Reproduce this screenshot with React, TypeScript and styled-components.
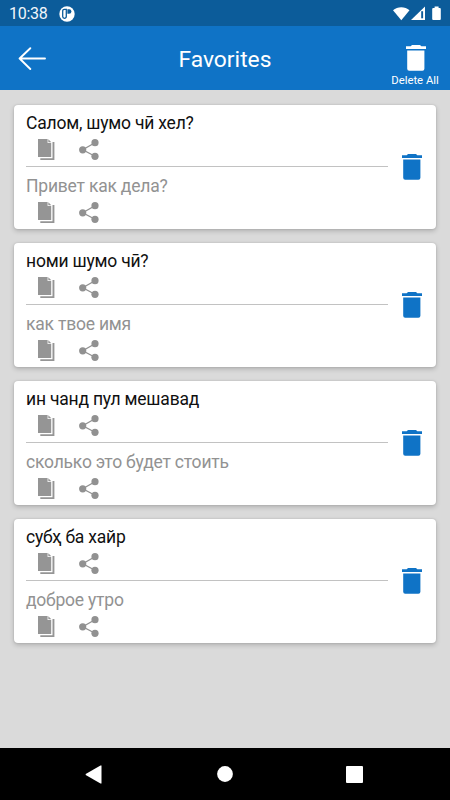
import React from 'react';
import styled, { createGlobalStyle } from 'styled-components';

const Global = createGlobalStyle`
  * { box-sizing: border-box; }
  body { margin: 0; font-family: Roboto, "Noto Sans", sans-serif; background: #dadada; }
`;

const Screen = styled.div`
  width: 450px;
  height: 800px;
  display: flex;
  flex-direction: column;
  overflow: hidden;
  background: #dadada;
  svg { display: block; flex: none; }
`;

const StatusBar = styled.header`
  height: 26px;
  flex: none;
  display: flex;
  align-items: center;
  padding: 1px 8px 0 9px;
  background: #0c5c9a;
  color: #f1f6fb;
`;

const Clock = styled.span`
  width: 50px;
  font-size: 16px;
  line-height: 24px;
  letter-spacing: -0.3px;
`;

const StatusIcons = styled.div`
  display: flex;
  align-items: center;
  margin-left: auto;
`;

const AppBar = styled.div`
  height: 64px;
  flex: none;
  display: grid;
  grid-template-columns: 80px 1fr 80px;
  background: #0f73c6;
  color: #fff;
`;

const BackButton = styled.button`
  border: 0;
  background: none;
  padding: 0 0 0 18px;
  display: flex;
  align-items: center;
`;

const Title = styled.h1`
  margin: 0;
  padding-top: 3px;
  font-size: 22.8px;
  font-weight: 400;
  line-height: 62px;
  text-align: center;
`;

const DeleteAll = styled.button`
  border: 0;
  background: none;
  color: #fff;
  font: 400 11.3px/14px Roboto, sans-serif;
  padding: 18px 0 0 10px;
  display: flex;
  flex-direction: column;
  align-items: center;
  justify-content: flex-start;
  gap: 2px;
  width: 80px;
  white-space: nowrap;
  svg { margin-left: 2px; }
`;

const List = styled.main`
  flex: 1;
  display: flex;
  flex-direction: column;
  gap: 14px;
  padding: 15px 14px 0;
`;

const Card = styled.article`
  height: 124px;
  flex: none;
  display: grid;
  grid-template-columns: 362px 1fr;
  padding-left: 12px;
  background: #fff;
  border-radius: 4px;
  box-shadow: 0 2px 5px rgba(0, 0, 0, 0.2), 0 0 2px rgba(0, 0, 0, 0.14);
`;

const Phrase = styled.section<{ $muted?: boolean }>`
  height: 62px;
  padding-top: ${(p) => (p.$muted ? 8 : 7)}px;
  border-bottom: ${(p) => (p.$muted ? 'none' : '1px solid #c2c2c2')};
  color: ${(p) => (p.$muted ? '#929292' : '#101010')};
`;

const PhraseText = styled.p`
  margin: 0;
  height: 22px;
  font-size: 17.5px;
  font-weight: 400;
  line-height: 22px;
  letter-spacing: -0.21px;
  white-space: nowrap;
`;

const Actions = styled.div`
  display: flex;
  gap: 24px;
  padding: 5px 0 0 11px;
`;

const RemoveButton = styled.button`
  border: 0;
  background: none;
  color: #0f73c6;
  padding: 0 0 1px;
  display: flex;
  align-items: center;
  justify-content: center;
`;

const NavBar = styled.nav`
  height: 52px;
  flex: none;
  display: grid;
  grid-template-columns: 17px 16px 17px;
  align-items: center;
  justify-content: space-between;
  padding: 0 87px 0 85px;
  background: #000;
`;

const HomeIcon = styled.svg`
  margin-left: 1px;
`;

const Trash = () => (
  <svg width="20" height="28" viewBox="0 0 20 28" fill="currentColor">
    <path d="M6 1h8l1.300 1.200H20V5H0V2.200H4.700zM1.200 6.600h17.200v18.200a2 2 0 0 1-2 2H3.200a2 2 0 0 1-2-2z" />
  </svg>
);

const CopyIcon = () => (
  <svg width="18" height="21" viewBox="0 0 18 21" fill="#959595">
    <path d="M1 0h9.600v4.100h3.600V18H1z" />
    <path d="M11.300 0.300l3 3h-3z" />
    <path d="M15.500 3h1.900v18H3.300v-1.700h12.200z" />
  </svg>
);

const ShareIcon = () => (
  <svg width="20" height="21" viewBox="0 0 20 21" fill="#919191">
    <path d="M16 3.700L3.700 10.800 16 17.300" fill="none" stroke="#919191" strokeWidth="1.300" />
    <circle cx="3.700" cy="10.800" r="3.600" />
    <circle cx="16" cy="3.700" r="3.600" />
    <circle cx="16" cy="17.300" r="3.600" />
  </svg>
);

const phrases = [
  ['Салом, шумо чӣ хел?', 'Привет как дела?'],
  ['номи шумо чӣ?', 'как твое имя'],
  ['ин чанд пул мешавад', 'сколько это будет стоить'],
  ['субҳ ба хайр', 'доброе утро'],
];

const PhraseBlock = ({ text, muted }: { text: string; muted?: boolean }) => (
  <Phrase $muted={muted}>
    <PhraseText>{text}</PhraseText>
    <Actions>
      <CopyIcon />
      <ShareIcon />
    </Actions>
  </Phrase>
);

export default function App() {
  return (
    <Screen>
      <Global />
      <StatusBar>
        <Clock>10:38</Clock>
        <svg width="16" height="16" viewBox="0 0 16 16">
          <circle cx="8" cy="8" r="7.700" fill="#fff" />
          <path d="M7.300 3.300H5.400a1.700 1.700 0 0 0-1.700 1.700v5.600a1.800 1.800 0 0 0 3.600 0z" fill="#fff" stroke="#0c5c9a" strokeWidth="1.300" />
          <path d="M8.400 3.200h1.700a2.300 2.300 0 0 1 0 4.600H8.400z" fill="#0c5c9a" />
        </svg>
        <StatusIcons>
          <svg width="50" height="16" viewBox="0 0 50 16" fill="#fff">
            <path d="M1 4.200C5.500 .2 13 .2 17.500 4.200L9.300 14.300z" />
            <path d="M33 .5V14H19z" />
            <path d="M29.200 5.200h1.900v7.100h-1.900z" fill="#0c5c9a" />
            <path d="M42.600 .5h4v1.400h1.200a1 1 0 0 1 1 1V13a1 1 0 0 1-1 1h-6.600a1 1 0 0 1-1-1V2.900a1 1 0 0 1 1-1h1.400z" />
          </svg>
        </StatusIcons>
      </StatusBar>
      <AppBar>
        <BackButton aria-label="Back">
          <svg width="29" height="24" viewBox="0 0 29 24" fill="none" stroke="#fff" strokeWidth="1.900" strokeLinecap="round" strokeLinejoin="round">
            <path d="M12.300 1.200L1.600 11.500l10.700 10.500M1.600 11.500H27" />
          </svg>
        </BackButton>
        <Title>Favorites</Title>
        <DeleteAll>
          <Trash />
          Delete All
        </DeleteAll>
      </AppBar>
      <List>
        {phrases.map(([source, translation]) => (
          <Card key={source}>
            <div>
              <PhraseBlock text={source} />
              <PhraseBlock text={translation} muted />
            </div>
            <RemoveButton aria-label="Delete">
              <Trash />
            </RemoveButton>
          </Card>
        ))}
      </List>
      <NavBar>
        <svg width="17" height="19" viewBox="0 0 17 19" fill="#fff"><path d="M16.500 .5v18H15.500L.7 10V9L15.500 .5z" /></svg>
        <HomeIcon width="16" height="16" viewBox="0 0 16 16" fill="#fff"><circle cx="8" cy="8" r="7.900" /></HomeIcon>
        <svg width="17" height="17" viewBox="0 0 17 17" fill="#fff"><rect width="17" height="17" rx="1" /></svg>
      </NavBar>
    </Screen>
  );
}
